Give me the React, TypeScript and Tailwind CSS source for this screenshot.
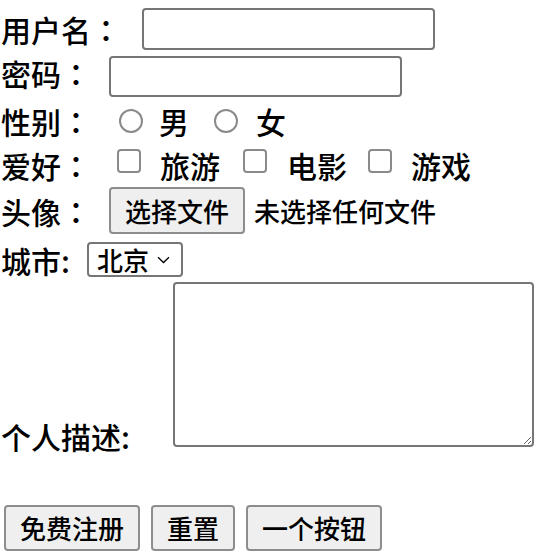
import { useState } from 'react'

const inputCls =
  'h-full w-[293px] rounded-[4px] border-2 border-[#767676] bg-white px-2 text-[26px] outline-none'
const btnCls =
  'flex h-[46px] items-center rounded-[4px] border-2 border-[#8d8d8d] bg-[#efefef] px-[14px] text-[26px] leading-none text-black'
const boxCls =
  'h-[24px] w-[24px] appearance-none border-2 border-[#8a8a8a] bg-white'

// full-width colon, centred like the reference
function Colon() {
  return <span className="font-['Noto_Sans_CJK_JP',sans-serif]">：</span>
}

export default function App() {
  const [city, setCity] = useState('bj')

  return (
    <form className="pl-[1px] font-['Noto_Sans_CJK_SC','Noto_Sans',sans-serif] text-[30px] font-medium leading-none text-black">
      {/* 用户名 */}
      <div className="mt-[8px] flex h-[42px] items-center">
        <span>
          用户名
          <Colon />
        </span>
        <input type="text" className={`ml-[21px] ${inputCls}`} />
      </div>

      {/* 密码 */}
      <div className="mt-[6px] flex h-[41px] items-center">
        <span className="mb-[8px]">
          密码
          <Colon />
        </span>
        <input type="password" className={`ml-[18px] ${inputCls}`} />
      </div>

      {/* 性别 */}
      <div className="flex h-[48px] items-center">
        <span>
          性别
          <Colon />
        </span>
        <input type="radio" name="sex" className={`ml-[28px] rounded-full ${boxCls}`} />
        <span className="ml-[16px]">男</span>
        <input type="radio" name="sex" className={`ml-[25px] rounded-full ${boxCls}`} />
        <span className="ml-[18px]">女</span>
      </div>

      {/* 爱好 */}
      <div className="flex h-[32px] items-center">
        <span className="mt-[8px]">
          爱好
          <Colon />
        </span>
        <input type="checkbox" className={`ml-[26px] rounded-[4px] ${boxCls}`} />
        <span className="ml-[19px] mt-[8px]">旅游</span>
        <input type="checkbox" className={`ml-[23px] rounded-[4px] ${boxCls}`} />
        <span className="ml-[20px] mt-[8px]">电影</span>
        <input type="checkbox" className={`ml-[21px] rounded-[4px] ${boxCls}`} />
        <span className="ml-[19px] mt-[8px]">游戏</span>
      </div>

      {/* 头像 */}
      <div className="mt-[10px] flex h-[47px] items-center">
        <span>
          头像
          <Colon />
        </span>
        <button type="button" className={`ml-[18px] h-[47px] ${btnCls}`}>
          选择文件
        </button>
        <span className="ml-[9px] text-[26px]">未选择任何文件</span>
      </div>

      {/* 城市 */}
      <div className="mt-[8px] flex h-[35px] items-center">
        <span>城市:</span>
        <div className="relative ml-[17px] h-[35px] w-[96px]">
          <select
            value={city}
            onChange={(e) => setCity(e.target.value)}
            className="h-full w-full appearance-none rounded-[4px] border-2 border-[#767676] bg-white pl-[8px] text-[26px] leading-none text-black outline-none"
          >
            <option value="bj">北京</option>
            <option value="sh">上海</option>
            <option value="gz">广州</option>
          </select>
          <svg
            className="pointer-events-none absolute right-[13px] top-[14px]"
            width="13"
            height="8"
            viewBox="0 0 13 8"
            fill="none"
          >
            <path d="M1 1.2 6.5 6.5 12 1.2" stroke="#000" strokeWidth="1.3" />
          </svg>
        </div>
      </div>

      {/* 个人描述 */}
      <div className="mt-[5px] flex items-end">
        <span className="-mb-[4px]">个人描述:</span>
        <textarea className="ml-[43px] h-[165px] w-[361px] rounded-[4px] border-2 border-[#767676] bg-white p-1 text-[26px] outline-none" />
      </div>

      {/* 按钮 */}
      <div className="mt-[58px] flex gap-[11px] pl-[3px]">
        <button type="submit" className={btnCls}>
          免费注册
        </button>
        <button type="reset" className={btnCls}>
          重置
        </button>
        <button type="button" className={btnCls}>
          一个按钮
        </button>
      </div>
    </form>
  )
}
